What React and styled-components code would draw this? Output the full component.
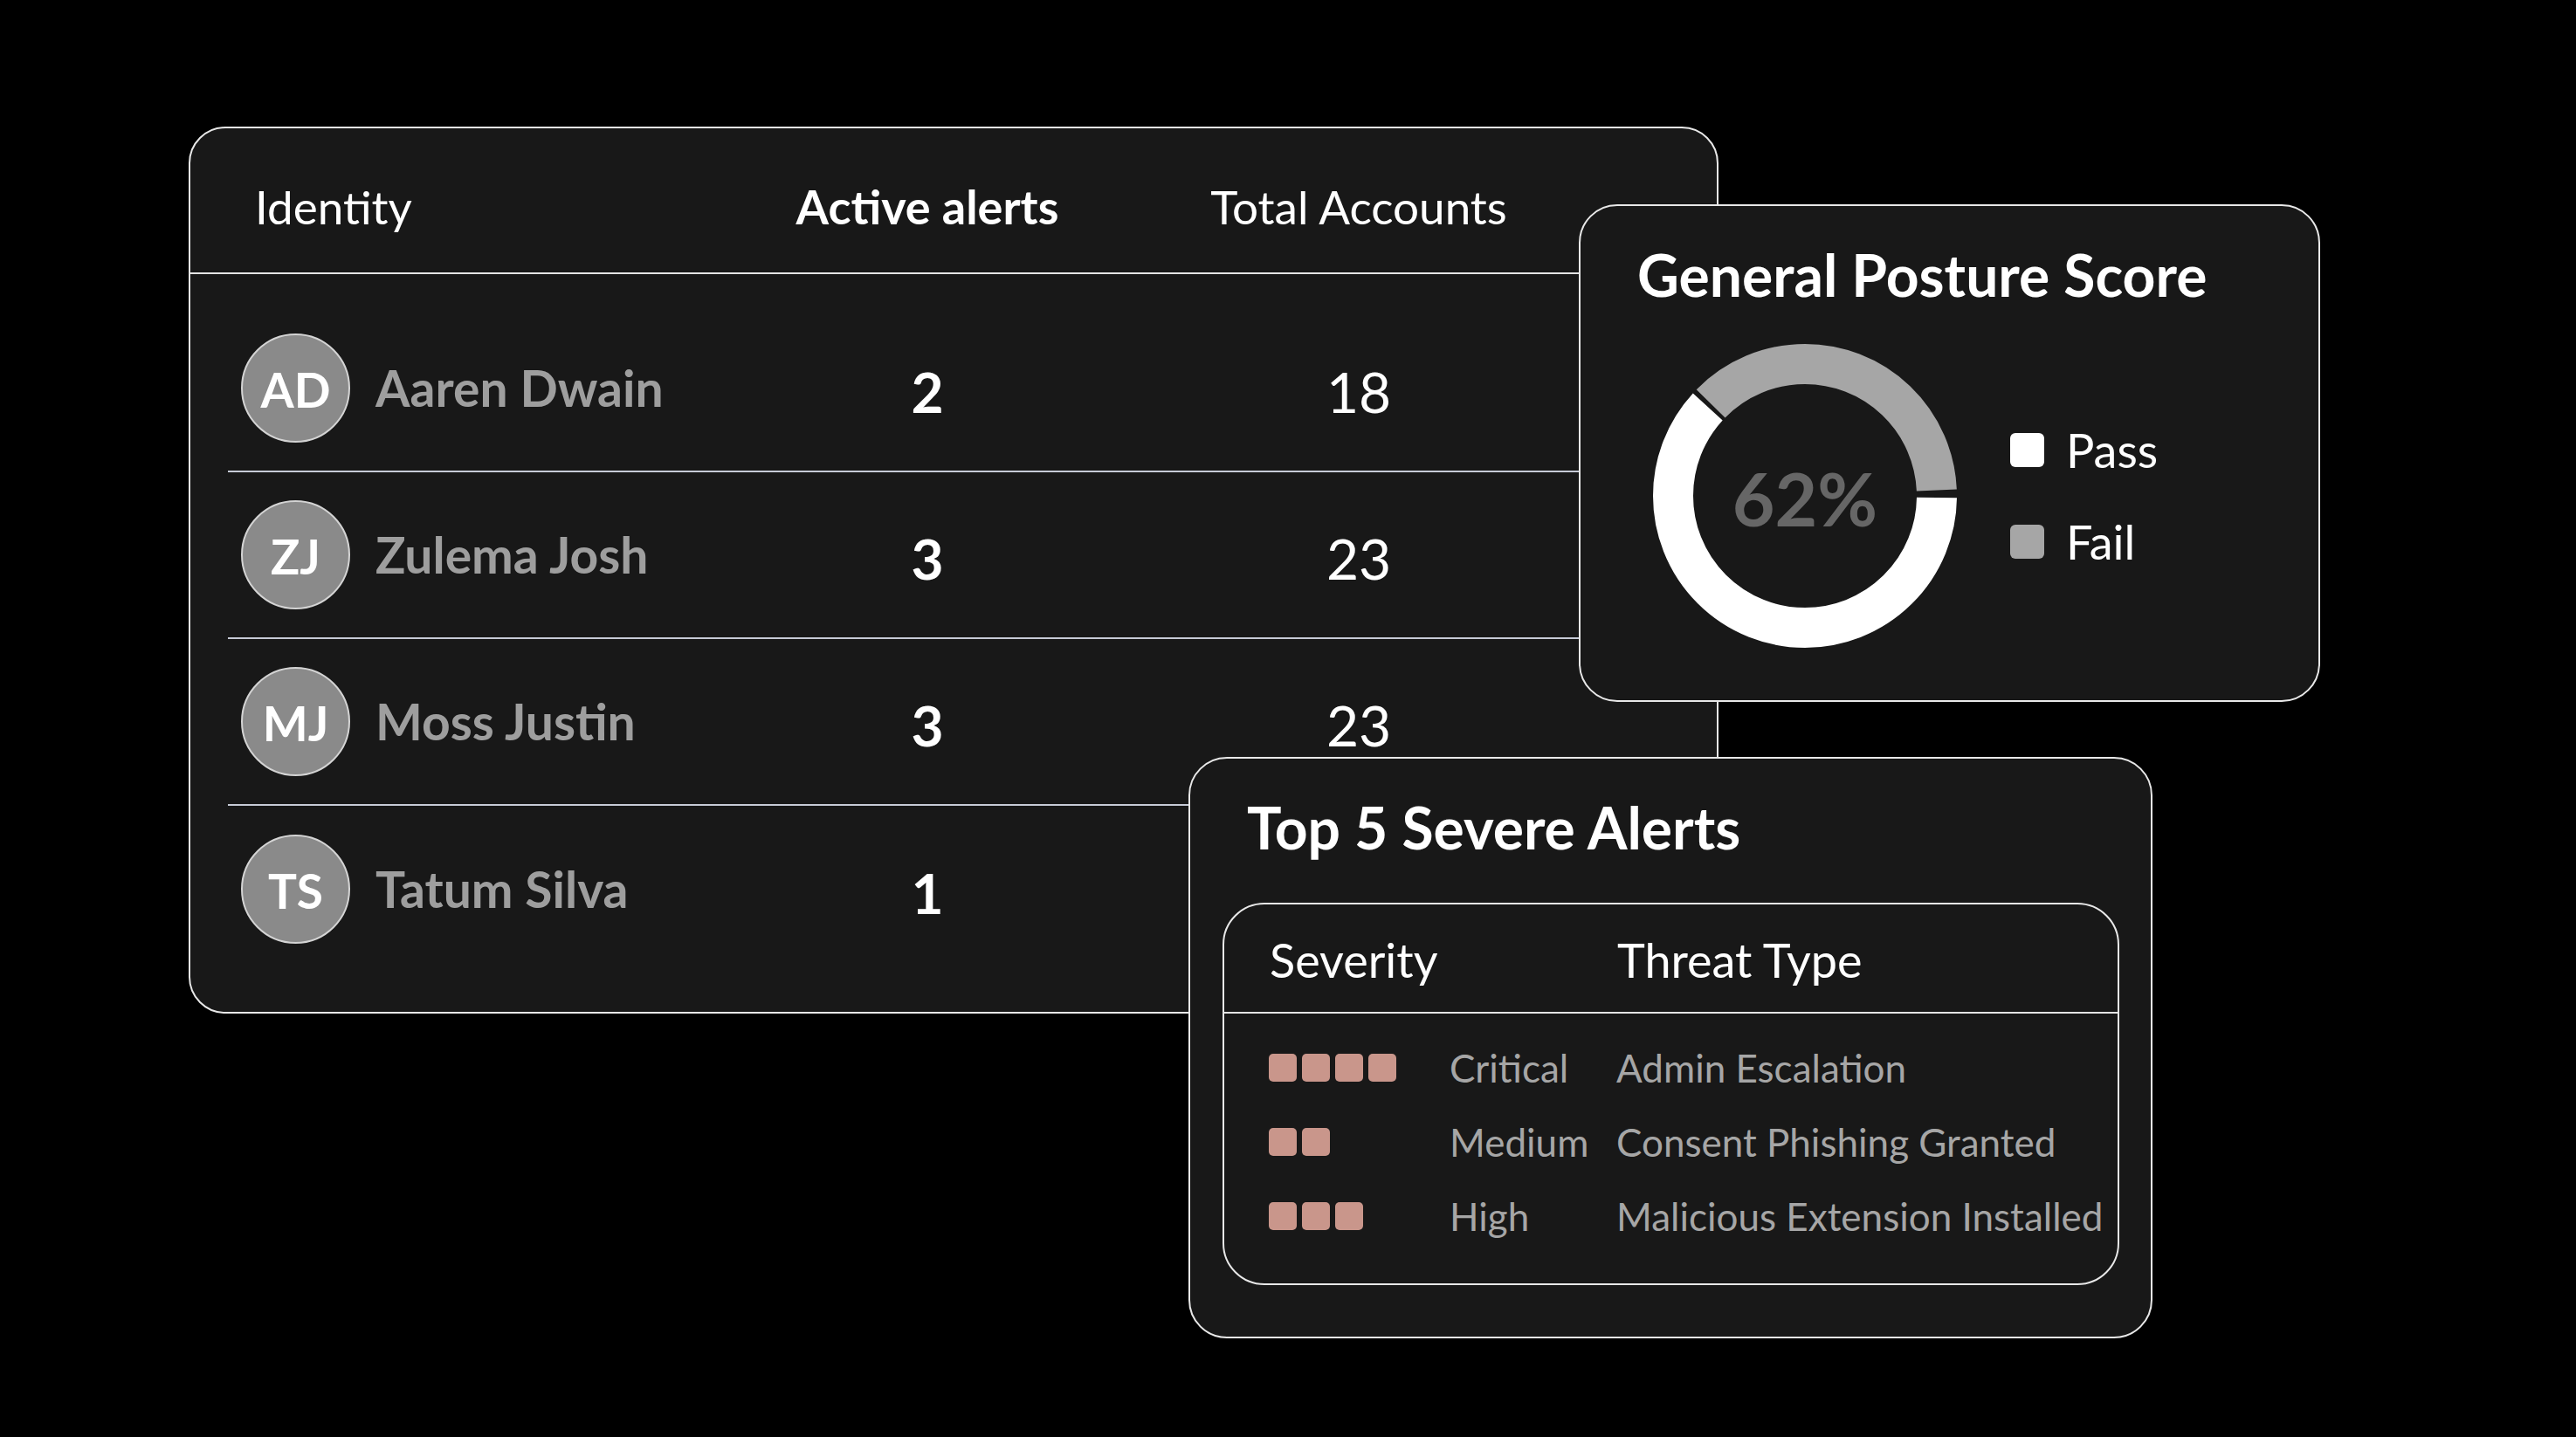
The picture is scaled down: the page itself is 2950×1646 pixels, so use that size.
import React from 'react'
import styled, { createGlobalStyle } from 'styled-components'

const people = [
    { initials: 'AD', name: 'Aaren Dwain', alerts: 2, accounts: 18 },
    { initials: 'ZJ', name: 'Zulema Josh', alerts: 3, accounts: 23 },
    { initials: 'MJ', name: 'Moss Justin', alerts: 3, accounts: 23 },
    { initials: 'TS', name: 'Tatum Silva', alerts: 1, accounts: '' },
]

const alerts = [
    { level: 4, label: 'Critical', threat: 'Admin Escalation' },
    { level: 2, label: 'Medium', threat: 'Consent Phishing Granted' },
    { level: 3, label: 'High', threat: 'Malicious Extension Installed' },
]

const PASS = 0.62
const R = 151
const C = 2 * Math.PI * R

const App = () => {
    const passLen = C * PASS - 4
    const failLen = C * (1 - PASS) - 10

    return (
        <>
            <GlobalStyle />
            <Page>
                {/* identity table */}
                <TableCard>
                    <TableHead>
                        <HeadCell $pad>Identity</HeadCell>
                        <HeadCell $bold $center>Active alerts</HeadCell>
                        <HeadCell $center>Total Accounts</HeadCell>
                    </TableHead>
                    <TableBody>
                        {people.map((p) => (
                            <TableRow key={p.initials}>
                                <Identity>
                                    <Avatar>{p.initials}</Avatar>
                                    <Name>{p.name}</Name>
                                </Identity>
                                <Count $bold>{p.alerts}</Count>
                                <Count>{p.accounts}</Count>
                            </TableRow>
                        ))}
                    </TableBody>
                </TableCard>

                {/* posture score */}
                <PostureCard>
                    <CardTitle>General Posture Score</CardTitle>
                    <PostureBody>
                        <Donut>
                            <svg width="352" height="352" viewBox="0 0 352 352">
                                <circle
                                    cx="176" cy="176" r={R} fill="none"
                                    stroke="#ffffff" strokeWidth="46"
                                    strokeDasharray={`${passLen} ${C - passLen}`}
                                    strokeDashoffset={-2}
                                />
                                <circle
                                    cx="176" cy="176" r={R} fill="none"
                                    stroke="#a6a6a6" strokeWidth="46"
                                    strokeDasharray={`${failLen} ${C - failLen}`}
                                    strokeDashoffset={-(C * PASS + 3)}
                                />
                            </svg>
                            <DonutLabel>62%</DonutLabel>
                        </Donut>
                        <Legend>
                            <LegendItem>
                                <Swatch $color="#ffffff" />
                                Pass
                            </LegendItem>
                            <LegendItem>
                                <Swatch $color="#a6a6a6" />
                                Fail
                            </LegendItem>
                        </Legend>
                    </PostureBody>
                </PostureCard>

                {/* severe alerts */}
                <AlertsCard>
                    <CardTitle $indent>Top 5 Severe Alerts</CardTitle>
                    <AlertsBox>
                        <AlertsHead>
                            <span>Severity</span>
                            <span>Threat Type</span>
                        </AlertsHead>
                        <AlertsBody>
                            {alerts.map((a) => (
                                <AlertRow key={a.label}>
                                    <Level>
                                        {Array.from({ length: a.level }).map((_, i) => (
                                            <LevelBlock key={i} />
                                        ))}
                                    </Level>
                                    <AlertText>{a.label}</AlertText>
                                    <AlertText>{a.threat}</AlertText>
                                </AlertRow>
                            ))}
                        </AlertsBody>
                    </AlertsBox>
                </AlertsCard>
            </Page>
        </>
    )
}

export default App

const GlobalStyle = createGlobalStyle`
    html, body {
        margin: 0;
        padding: 0;
        background: #000;
    }
    body {
        font-family: 'Lato', 'Liberation Sans', sans-serif;
        color: #fff;
    }
`

const Page = styled.div`
    position: relative;
    width: 2950px;
    height: 1646px;
    box-sizing: border-box;
    padding: 145px 0 0 216px;
    background: #000;
`

//main table
const TableCard = styled.div`
    width: 1752px;
    height: 1016px;
    box-sizing: border-box;
    border: 2px solid #e8e8e8;
    border-radius: 42px;
    background: #181818;
    overflow: hidden;
`

const TableHead = styled.div`
    display: grid;
    grid-template-columns: 601px 400px 588px;
    align-items: center;
    height: 167px;
    box-sizing: border-box;
    padding: 14px 43px 0;
    border-bottom: 2px solid #e4e4e4;
`

const HeadCell = styled.div`
    font-size: ${({ $bold }) => ($bold ? '54px' : '53px')};
    line-height: 1;
    font-weight: ${({ $bold }) => ($bold ? 700 : 400)};
    text-align: ${({ $center }) => ($center ? 'center' : 'left')};
    padding-left: ${({ $pad }) => ($pad ? '31px' : '0')};
`

const TableBody = styled.div`
    padding: 36px 43px 0;
`

const TableRow = styled.div`
    display: grid;
    grid-template-columns: 601px 400px 588px;
    align-items: center;
    height: 191px;
    box-sizing: border-box;
    border-bottom: 2px solid #c6cad6;

    &:last-child {
        border-bottom: none;
    }
`

const Identity = styled.div`
    display: flex;
    align-items: center;
    gap: 29px;
    padding-left: 15px;
`

const Avatar = styled.div`
    width: 125px;
    height: 125px;
    box-sizing: border-box;
    border-radius: 50%;
    border: 2px solid #d4d4d4;
    background: #8a8a8a;
    display: flex;
    align-items: center;
    justify-content: center;
    font-size: 55px;
    font-weight: 700;
    color: #fff;
    line-height: 1;
    padding-top: 4px;
`

const Name = styled.div`
    font-size: 57px;
    font-weight: 700;
    line-height: 1;
    color: #9e9e9e;
`

const Count = styled.div`
    text-align: center;
    font-size: 64px;
    line-height: 1;
    font-weight: ${({ $bold }) => ($bold ? 700 : 400)};
    padding-top: 8px;
`

//shared card bits
const CardTitle = styled.div`
    font-size: 66px;
    font-weight: 700;
    line-height: 1;
    padding-left: ${({ $indent }) => ($indent ? '28px' : '0')};
`

//posture
const PostureCard = styled.div`
    position: absolute;
    left: 1808px;
    top: 234px;
    width: 849px;
    height: 570px;
    box-sizing: border-box;
    padding: 46px 0 0 65px;
    border: 2px solid #e8e8e8;
    border-radius: 44px;
    background: #181818;
    z-index: 2;
`

const PostureBody = styled.div`
    display: flex;
    align-items: center;
    gap: 59px;
    margin-top: 44px;
    margin-left: 16px;
`

const Donut = styled.div`
    position: relative;
    width: 352px;
    height: 352px;

    svg {
        display: block;
    }
`

const DonutLabel = styled.div`
    position: absolute;
    inset: 0;
    display: flex;
    align-items: center;
    justify-content: center;
    font-size: 84px;
    font-weight: 700;
    color: #666;
    line-height: 1;
    padding-top: 6px;
`

const Legend = styled.div`
    display: flex;
    flex-direction: column;
    gap: 51px;
`

const LegendItem = styled.div`
    display: flex;
    align-items: center;
    gap: 25px;
    font-size: 54px;
    line-height: 1;
`

const Swatch = styled.span`
    width: 39px;
    height: 39px;
    border-radius: 6px;
    background: ${({ $color }) => $color};
`

//alerts
const AlertsCard = styled.div`
    position: absolute;
    left: 1361px;
    top: 867px;
    width: 1104px;
    height: 666px;
    box-sizing: border-box;
    padding: 46px 36px 0 37px;
    border: 2px solid #e8e8e8;
    border-radius: 44px;
    background: #181818;
    z-index: 2;
`

const AlertsBox = styled.div`
    margin-top: 53px;
    height: 438px;
    box-sizing: border-box;
    border: 2px solid #e8e8e8;
    border-radius: 48px;
`

const AlertsHead = styled.div`
    display: grid;
    grid-template-columns: 398px 1fr;
    align-items: center;
    height: 125px;
    box-sizing: border-box;
    padding: 4px 0 0 52px;
    border-bottom: 2px solid #e4e4e4;
    font-size: 54px;
    line-height: 1;
`

const AlertsBody = styled.div`
    padding: 19px 0 0 51px;
`

const AlertRow = styled.div`
    display: grid;
    grid-template-columns: 207px 191px 1fr;
    align-items: center;
    height: 85px;
`

const Level = styled.div`
    display: flex;
    gap: 6px;
`

const LevelBlock = styled.span`
    width: 32px;
    height: 32px;
    border-radius: 5px;
    background: #c9968b;
`

const AlertText = styled.div`
    font-size: 44px;
    line-height: 1;
    color: #a6a6a6;
    white-space: nowrap;
`
